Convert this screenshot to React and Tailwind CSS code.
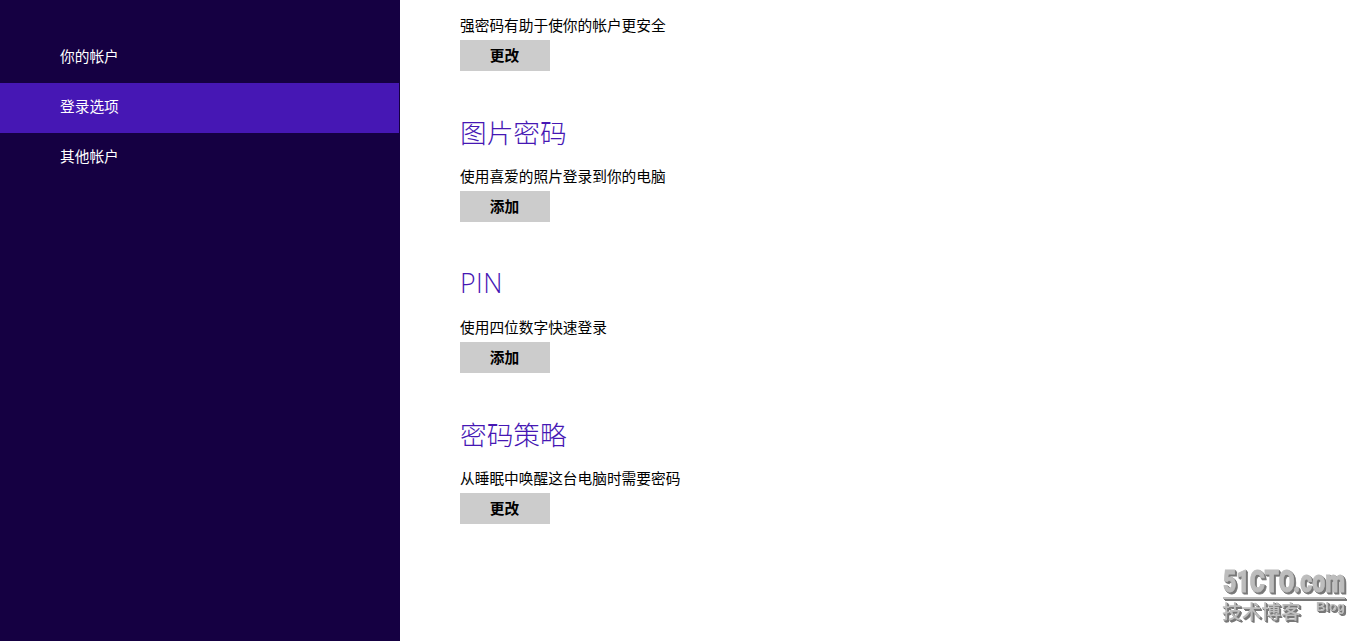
import React from "react";

const menuItems = [
  { id: "account", label: "你的帐户" },
  { id: "signin", label: "登录选项" },
  { id: "others", label: "其他帐户" },
];

const sections = [
  { id: "password", text: "强密码有助于使你的帐户更安全", action: "更改" },
  { id: "picture", title: "图片密码", text: "使用喜爱的照片登录到你的电脑", action: "添加" },
  { id: "pin", title: "PIN", latin: true, text: "使用四位数字快速登录", action: "添加" },
  { id: "policy", title: "密码策略", text: "从睡眠中唤醒这台电脑时需要密码", action: "更改" },
];

const Sidebar = ({ active }) => (
  <nav className="w-[400px] shrink-0 bg-[#150042] pt-[33px] pr-px">
    {menuItems.map((item) => (
      <a
        key={item.id}
        className={`flex h-[50px] items-center pb-[3px] pl-[60px] text-[14.7px] text-white ${
          active === item.id ? "bg-[#4617b4]" : ""
        }`}
      >
        {item.label}
      </a>
    ))}
  </nav>
);

const Section = ({ title, latin, text, action }) => (
  <section className="flex flex-col items-start">
    {title && (
      <h2
        className={`h-10 text-[26.7px] leading-10 font-light text-[#4617b4] ${
          latin ? "mt-[41px] mb-[14px] tracking-[0.5px]" : "mt-[42px] mb-[13px]"
        }`}
      >
        {title}
      </h2>
    )}
    <p className="mb-[5px] h-5 text-[14.7px] leading-5 text-black">{text}</p>
    <button className="h-[31px] w-[90px] bg-[#cccccc] pr-px text-[14.7px] leading-[31px] font-bold text-black">
      {action}
    </button>
  </section>
);

const Watermark = () => (
  <svg
    className="absolute right-[10px] bottom-[10px] fill-[#bdbdbd] [filter:drop-shadow(1px_1px_0_#777)_drop-shadow(1px_1px_0_#777)]"
    width="140"
    height="66"
    viewBox="0 0 140 66"
  >
    <text
      x="7"
      y="27"
      fontFamily="Roboto, sans-serif"
      fontWeight="900"
      fontSize="32"
      textLength="122"
      lengthAdjust="spacingAndGlyphs"
      stroke="#bdbdbd"
      strokeWidth="0.8"
    >
      51CTO.com
    </text>
    <rect x="7" y="32" width="122" height="2" />
    <text
      x="100"
      y="46"
      fontFamily="Liberation Sans, sans-serif"
      fontWeight="700"
      fontSize="13"
      textLength="29"
      lengthAdjust="spacingAndGlyphs"
    >
      Blog
    </text>
    <text x="6" y="54" fontFamily="Noto Sans CJK SC, sans-serif" fontSize="19.7" fontWeight="500">
      技术博客
    </text>
  </svg>
);

const App = () => {
  return (
    <div className="relative flex h-[641px] w-[1366px] overflow-hidden bg-white font-['Open_Sans','Noto_Sans_CJK_SC',sans-serif]">
      <Sidebar active="signin" />
      <main className="flex-1 pt-[15px] pl-[60px]">
        {sections.map((section) => (
          <Section key={section.id} {...section} />
        ))}
      </main>
      <Watermark />
    </div>
  );
};

export default App;
